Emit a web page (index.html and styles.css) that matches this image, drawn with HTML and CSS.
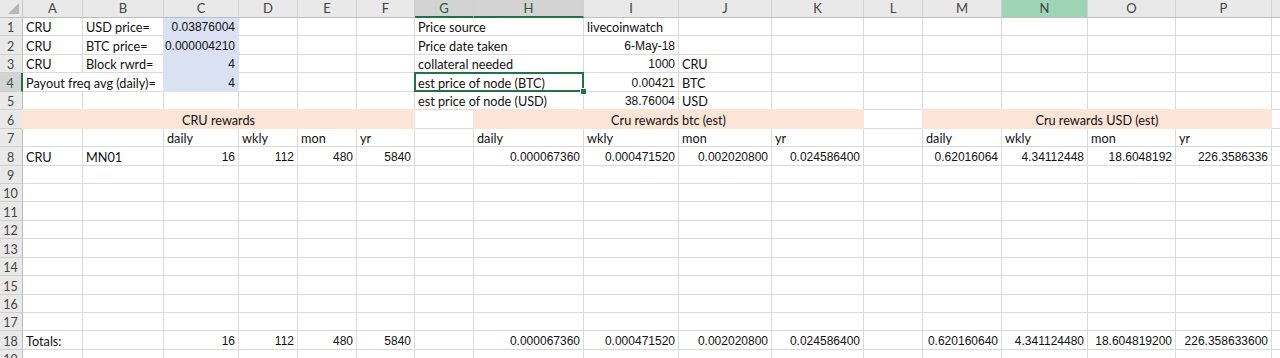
FILE: index.html
```html
<!DOCTYPE html>
<html>
<head>
<meta charset="utf-8">
<link rel="stylesheet" href="styles.css">
</head>
<body>
<div class="sheet">
  <div class="corner"><span class="tri"></span></div>
  <div class="ch">A</div><div class="ch">B</div><div class="ch">C</div><div class="ch">D</div><div class="ch">E</div><div class="ch">F</div><div class="ch chs">G</div><div class="ch chs">H</div><div class="ch">I</div><div class="ch">J</div><div class="ch">K</div><div class="ch">L</div><div class="ch">M</div><div class="ch chg">N</div><div class="ch">O</div><div class="ch">P</div><div class="ch"></div>

  <div class="rh">1</div>
  <div class="c">CRU</div><div class="c">USD price=</div><div class="c n blue">0.03876004</div><div class="c"></div><div class="c"></div><div class="c"></div><div class="c s2">Price source</div><div class="c">livecoinwatch</div><div class="c"></div><div class="c"></div><div class="c"></div><div class="c"></div><div class="c"></div><div class="c"></div><div class="c"></div><div class="c"></div>

  <div class="rh">2</div>
  <div class="c">CRU</div><div class="c">BTC price=</div><div class="c n blue bt">0.000004210</div><div class="c"></div><div class="c"></div><div class="c"></div><div class="c s2">Price date taken</div><div class="c n">6-May-18</div><div class="c"></div><div class="c"></div><div class="c"></div><div class="c"></div><div class="c"></div><div class="c"></div><div class="c"></div><div class="c"></div>

  <div class="rh">3</div>
  <div class="c">CRU</div><div class="c">Block rwrd=</div><div class="c n blue bt">4</div><div class="c"></div><div class="c"></div><div class="c"></div><div class="c s2">collateral needed</div><div class="c n">1000</div><div class="c">CRU</div><div class="c"></div><div class="c"></div><div class="c"></div><div class="c"></div><div class="c"></div><div class="c"></div><div class="c"></div>

  <div class="rh rhs">4</div>
  <div class="c s2">Payout freq avg (daily)=</div><div class="c n blue bt">4</div><div class="c"></div><div class="c"></div><div class="c"></div><div class="c s2 sel">est price of node (BTC)</div><div class="c n">0.00421</div><div class="c">BTC</div><div class="c"></div><div class="c"></div><div class="c"></div><div class="c"></div><div class="c"></div><div class="c"></div><div class="c"></div>

  <div class="rh">5</div>
  <div class="c"></div><div class="c"></div><div class="c"></div><div class="c"></div><div class="c"></div><div class="c"></div><div class="c s2">est price of node (USD)</div><div class="c n">38.76004</div><div class="c">USD</div><div class="c"></div><div class="c"></div><div class="c"></div><div class="c"></div><div class="c"></div><div class="c"></div><div class="c"></div>

  <div class="rh">6</div>
  <div class="c s6 peach">CRU rewards</div><div class="c"></div><div class="c s4 peach">Cru rewards btc (est)</div><div class="c"></div><div class="c s4 peach">Cru rewards USD (est)</div><div class="c"></div>

  <div class="rh">7</div>
  <div class="c"></div><div class="c"></div><div class="c">daily</div><div class="c">wkly</div><div class="c">mon</div><div class="c">yr</div><div class="c"></div><div class="c">daily</div><div class="c">wkly</div><div class="c">mon</div><div class="c">yr</div><div class="c"></div><div class="c">daily</div><div class="c">wkly</div><div class="c">mon</div><div class="c">yr</div><div class="c"></div>

  <div class="rh">8</div>
  <div class="c">CRU</div><div class="c">MN01</div><div class="c n">16</div><div class="c n">112</div><div class="c n">480</div><div class="c n">5840</div><div class="c"></div><div class="c n">0.000067360</div><div class="c n">0.000471520</div><div class="c n">0.002020800</div><div class="c n">0.024586400</div><div class="c"></div><div class="c n">0.62016064</div><div class="c n">4.34112448</div><div class="c n">18.6048192</div><div class="c n">226.3586336</div><div class="c"></div>

  <div class="rh">9</div>
  <div class="c"></div><div class="c"></div><div class="c"></div><div class="c"></div><div class="c"></div><div class="c"></div><div class="c"></div><div class="c"></div><div class="c"></div><div class="c"></div><div class="c"></div><div class="c"></div><div class="c"></div><div class="c"></div><div class="c"></div><div class="c"></div><div class="c"></div>

  <div class="rh">10</div>
  <div class="c"></div><div class="c"></div><div class="c"></div><div class="c"></div><div class="c"></div><div class="c"></div><div class="c"></div><div class="c"></div><div class="c"></div><div class="c"></div><div class="c"></div><div class="c"></div><div class="c"></div><div class="c"></div><div class="c"></div><div class="c"></div><div class="c"></div>

  <div class="rh">11</div>
  <div class="c"></div><div class="c"></div><div class="c"></div><div class="c"></div><div class="c"></div><div class="c"></div><div class="c"></div><div class="c"></div><div class="c"></div><div class="c"></div><div class="c"></div><div class="c"></div><div class="c"></div><div class="c"></div><div class="c"></div><div class="c"></div><div class="c"></div>

  <div class="rh">12</div>
  <div class="c"></div><div class="c"></div><div class="c"></div><div class="c"></div><div class="c"></div><div class="c"></div><div class="c"></div><div class="c"></div><div class="c"></div><div class="c"></div><div class="c"></div><div class="c"></div><div class="c"></div><div class="c"></div><div class="c"></div><div class="c"></div><div class="c"></div>

  <div class="rh">13</div>
  <div class="c"></div><div class="c"></div><div class="c"></div><div class="c"></div><div class="c"></div><div class="c"></div><div class="c"></div><div class="c"></div><div class="c"></div><div class="c"></div><div class="c"></div><div class="c"></div><div class="c"></div><div class="c"></div><div class="c"></div><div class="c"></div><div class="c"></div>

  <div class="rh">14</div>
  <div class="c"></div><div class="c"></div><div class="c"></div><div class="c"></div><div class="c"></div><div class="c"></div><div class="c"></div><div class="c"></div><div class="c"></div><div class="c"></div><div class="c"></div><div class="c"></div><div class="c"></div><div class="c"></div><div class="c"></div><div class="c"></div><div class="c"></div>

  <div class="rh">15</div>
  <div class="c"></div><div class="c"></div><div class="c"></div><div class="c"></div><div class="c"></div><div class="c"></div><div class="c"></div><div class="c"></div><div class="c"></div><div class="c"></div><div class="c"></div><div class="c"></div><div class="c"></div><div class="c"></div><div class="c"></div><div class="c"></div><div class="c"></div>

  <div class="rh">16</div>
  <div class="c"></div><div class="c"></div><div class="c"></div><div class="c"></div><div class="c"></div><div class="c"></div><div class="c"></div><div class="c"></div><div class="c"></div><div class="c"></div><div class="c"></div><div class="c"></div><div class="c"></div><div class="c"></div><div class="c"></div><div class="c"></div><div class="c"></div>

  <div class="rh">17</div>
  <div class="c"></div><div class="c"></div><div class="c"></div><div class="c"></div><div class="c"></div><div class="c"></div><div class="c"></div><div class="c"></div><div class="c"></div><div class="c"></div><div class="c"></div><div class="c"></div><div class="c"></div><div class="c"></div><div class="c"></div><div class="c"></div><div class="c"></div>

  <div class="rh">18</div>
  <div class="c">Totals:</div><div class="c"></div><div class="c n">16</div><div class="c n">112</div><div class="c n">480</div><div class="c n">5840</div><div class="c"></div><div class="c n">0.000067360</div><div class="c n">0.000471520</div><div class="c n">0.002020800</div><div class="c n">0.024586400</div><div class="c"></div><div class="c n">0.620160640</div><div class="c n">4.341124480</div><div class="c n">18.604819200</div><div class="c n">226.358633600</div><div class="c"></div>

  <div class="rh">19</div>
  <div class="c"></div><div class="c"></div><div class="c"></div><div class="c"></div><div class="c"></div><div class="c"></div><div class="c"></div><div class="c"></div><div class="c"></div><div class="c"></div><div class="c"></div><div class="c"></div><div class="c"></div><div class="c"></div><div class="c"></div><div class="c"></div><div class="c"></div>
</div>
</body>
</html>
```
FILE: styles.css
```css
html, body {
  margin: 0;
  padding: 0;
  background: #ffffff;
}

.sheet {
  width: 1280px;
  height: 358px;
  overflow: hidden;
  display: grid;
  grid-template-columns: 23px 60px 81px 75px 59px 59px 58px 59px 110px 95px 93px 92px 59px 79px 86px 88px 96px 60px;
  grid-template-rows: 18px repeat(19, 18.44px);
  font-family: "Lato", "Liberation Sans", sans-serif;
  font-size: 12.7px;
  color: #111;
}

.corner {
  position: relative;
  background: #e9e9e9;
  border-right: 1px solid #c6c6c6;
  border-bottom: 1px solid #bdbdbd;
  box-sizing: border-box;
}

.tri {
  position: absolute;
  right: 3px;
  bottom: 3px;
  width: 0;
  height: 0;
  border-left: 11px solid transparent;
  border-bottom: 11px solid #b8b8b8;
}

.ch {
  box-sizing: border-box;
  background: #e9e9e9;
  border-right: 1px solid #d0d0d0;
  border-bottom: 1px solid #bdbdbd;
  display: flex;
  align-items: center;
  justify-content: center;
  color: #444;
  font-size: 13px;
  line-height: 1;
}

.chs {
  background: #d3d3d3;
  border-bottom: 2px solid #217346;
  color: #2b5a40;
}

.chg {
  background: #9fd5b7;
}

.rh {
  box-sizing: border-box;
  background: #e9e9e9;
  border-right: 1px solid #bdbdbd;
  border-bottom: 1px solid #d0d0d0;
  display: flex;
  align-items: flex-end;
  justify-content: center;
  color: #444;
  font-size: 12.5px;
  line-height: 15px;
  padding-right: 1px;
}

.rhs {
  background: #d3d3d3;
  border-right: 2px solid #217346;
  color: #2b5a40;
}

.c {
  box-sizing: border-box;
  border-right: 1px solid #dadada;
  border-bottom: 1px solid #dadada;
  display: flex;
  align-items: flex-end;
  justify-content: flex-start;
  padding: 0 3px 0 3px;
  white-space: nowrap;
  line-height: 15px;
  min-width: 0;
}

.n {
  justify-content: flex-end;
  padding-right: 3px;
  font-family: "Liberation Sans", "Lato", sans-serif;
  font-size: 12px;
}

.s2 { grid-column: span 2; }
.s4 { grid-column: span 4; }
.s6 { grid-column: span 6; }

.blue {
  background: #d9e1f2;
  border-color: #d9e1f2;
  box-shadow: -1px 0 0 #d9e1f2;
}

.blue.bt {
  box-shadow: -1px 0 0 #d9e1f2, 0 -1px 0 #d9e1f2, -1px -1px 0 #d9e1f2;
}

.peach {
  background: #fce4d6;
  border-color: #fce4d6;
  justify-content: center;
  box-shadow: -1px 0 0 #fce4d6, 0 -1px 0 #fce4d6, -1px -1px 0 #fce4d6;
}

.sel {
  position: relative;
}

.sel::after {
  content: "";
  position: absolute;
  left: -1px;
  top: -1px;
  right: -1px;
  bottom: -1px;
  border: 2px solid #217346;
}

.sel::before {
  content: "";
  position: absolute;
  right: -4px;
  bottom: -4px;
  width: 5px;
  height: 5px;
  background: #217346;
  border: 1px solid #ffffff;
  z-index: 1;
}
```
